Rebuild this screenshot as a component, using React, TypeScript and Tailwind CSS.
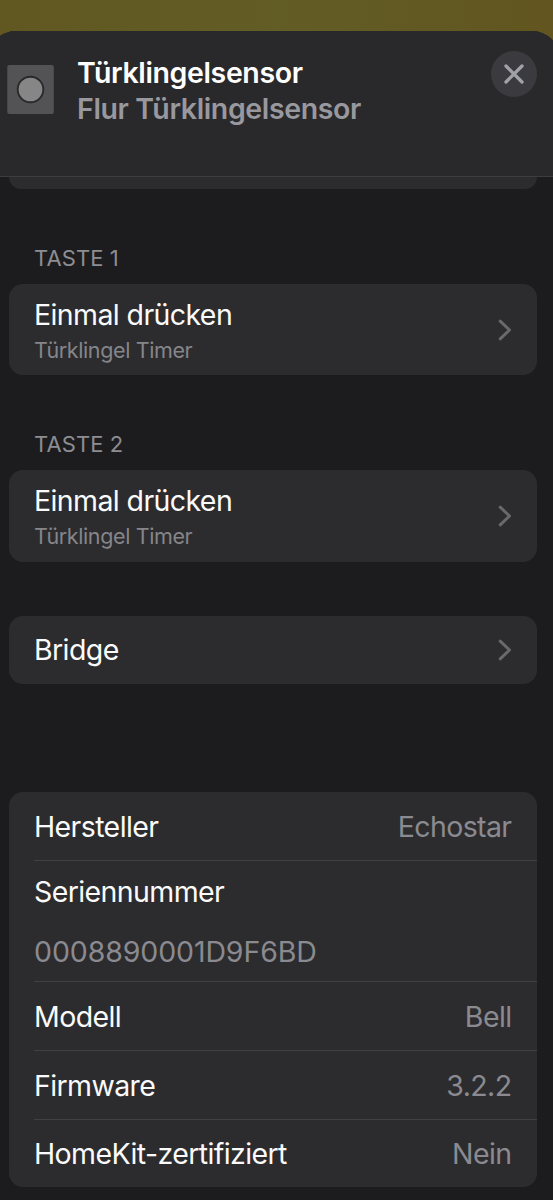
import type { ReactNode } from "react";

type Detail = { label: string; value: string };

const actions = [
  { heading: "TASTE 1", title: "Einmal drücken", subtitle: "Türklingel Timer" },
  { heading: "TASTE 2", title: "Einmal drücken", subtitle: "Türklingel Timer" },
];

const details: Detail[] = [
  { label: "Modell", value: "Bell" },
  { label: "Firmware", value: "3.2.2" },
  { label: "HomeKit-zertifiziert", value: "Nein" },
];

export default function App() {
  return (
    <div className="h-[1200px] w-[553px] overflow-hidden bg-linear-to-r from-[#615721] via-[#625d25] via-50% to-[#62551f] pt-[31px] font-['Inter','Liberation_Sans',sans-serif] text-[28.5px] leading-[36px] tracking-[-0.6px] text-[#fafafa]">
      <div className="-mr-[7px] -ml-[12px] h-[1169px] overflow-hidden rounded-t-[28px] bg-[#1c1c1e]">
        <Header />
        <main className="mr-[23px] ml-[21px]">
          <div className="h-[12px] rounded-b-[14px] bg-[#2c2c2e]" />
          {actions.map((action) => (
            <section className="pt-[54px]" key={action.heading}>
              <h2 className="h-[41px] pl-[25px] text-[22px] leading-[31px] tracking-[0.1px] text-[#8d8d92]">
                {action.heading}
              </h2>
              <Card className="flex h-[91.4px] items-center justify-between px-[25px]">
                <div className="pt-[4px]">
                  <p>{action.title}</p>
                  <p className="text-[21.5px] leading-[34px] tracking-[-0.38px] text-[#85858a]">
                    {action.subtitle}
                  </p>
                </div>
                <Chevron />
              </Card>
            </section>
          ))}
          <Card className="mt-[54.2px] flex h-[68px] items-center justify-between px-[25px]">
            <p className="pt-px">Bridge</p>
            <Chevron />
          </Card>
          <Card className="mt-[108.5px] h-[395px]">
            <div className="pl-[25px]">
              <Row label="Hersteller" value="Echostar" />
            </div>
            <div className="ml-[25px] h-[121px] border-t border-[#404043] pt-[13px]">
              <p>Seriennummer</p>
              <p className="mt-[24px] tracking-[-0.1px] text-[#8a8a90]">
                0008890001D9F6BD
              </p>
            </div>
            {details.map((detail) => (
              <div
                className="ml-[25px] border-t border-[#404043]"
                key={detail.label}
              >
                <Row label={detail.label} value={detail.value} />
              </div>
            ))}
          </Card>
        </main>
      </div>
    </div>
  );
}

function Header() {
  return (
    <header className="flex h-[146px] border-b border-[#3d3d40] bg-[#29292b] pr-[23px] pl-[19px]">
      <SensorIcon />
      <div className="ml-[23px] flex-1 pt-[24px] text-[28.5px] font-semibold tracking-[-0.37px]">
        <h1 className="text-white">Türklingelsensor</h1>
        <p className="text-[#98989e]">Flur Türklingelsensor</p>
      </div>
      <button
        aria-label="Schließen"
        className="mt-[20px] flex size-[46px] items-center justify-center rounded-full bg-[#3b3b3f]"
        type="button"
      >
        <svg className="size-[20px]" fill="none" viewBox="0 0 20 20">
          <path
            d="M2 2L18 18M18 2L2 18"
            stroke="#a1a1a8"
            strokeLinecap="round"
            strokeWidth="3.3"
          />
        </svg>
      </button>
    </header>
  );
}

function SensorIcon() {
  return (
    <svg className="mt-[34px] h-[50px] w-[47px]" viewBox="0 0 47 50">
      <rect fill="#535355" height="49" rx="2" width="46.5" x="0.3" y="0" />
      <circle
        cx="23.5"
        cy="24.5"
        fill="#868686"
        r="12.8"
        stroke="#29292b"
        strokeWidth="1.9"
      />
    </svg>
  );
}

function Card({
  children,
  className,
}: {
  children: ReactNode;
  className: string;
}) {
  return (
    <div className={`rounded-[14px] bg-[#2c2c2e] ${className}`}>{children}</div>
  );
}

function Row({ label, value }: Detail) {
  return (
    <div className="flex h-[67.7px] items-center justify-between pt-[2px] pr-[25.5px]">
      <span>{label}</span>
      <span className="text-[#8a8a90]">{value}</span>
    </div>
  );
}

function Chevron() {
  return (
    <svg className="h-[22px] w-[14px]" fill="none" viewBox="0 0 14 22">
      <path
        d="M2.2 2.2L11.5 11L2.2 19.8"
        stroke="#69696d"
        strokeLinecap="round"
        strokeLinejoin="round"
        strokeWidth="3"
      />
    </svg>
  );
}
